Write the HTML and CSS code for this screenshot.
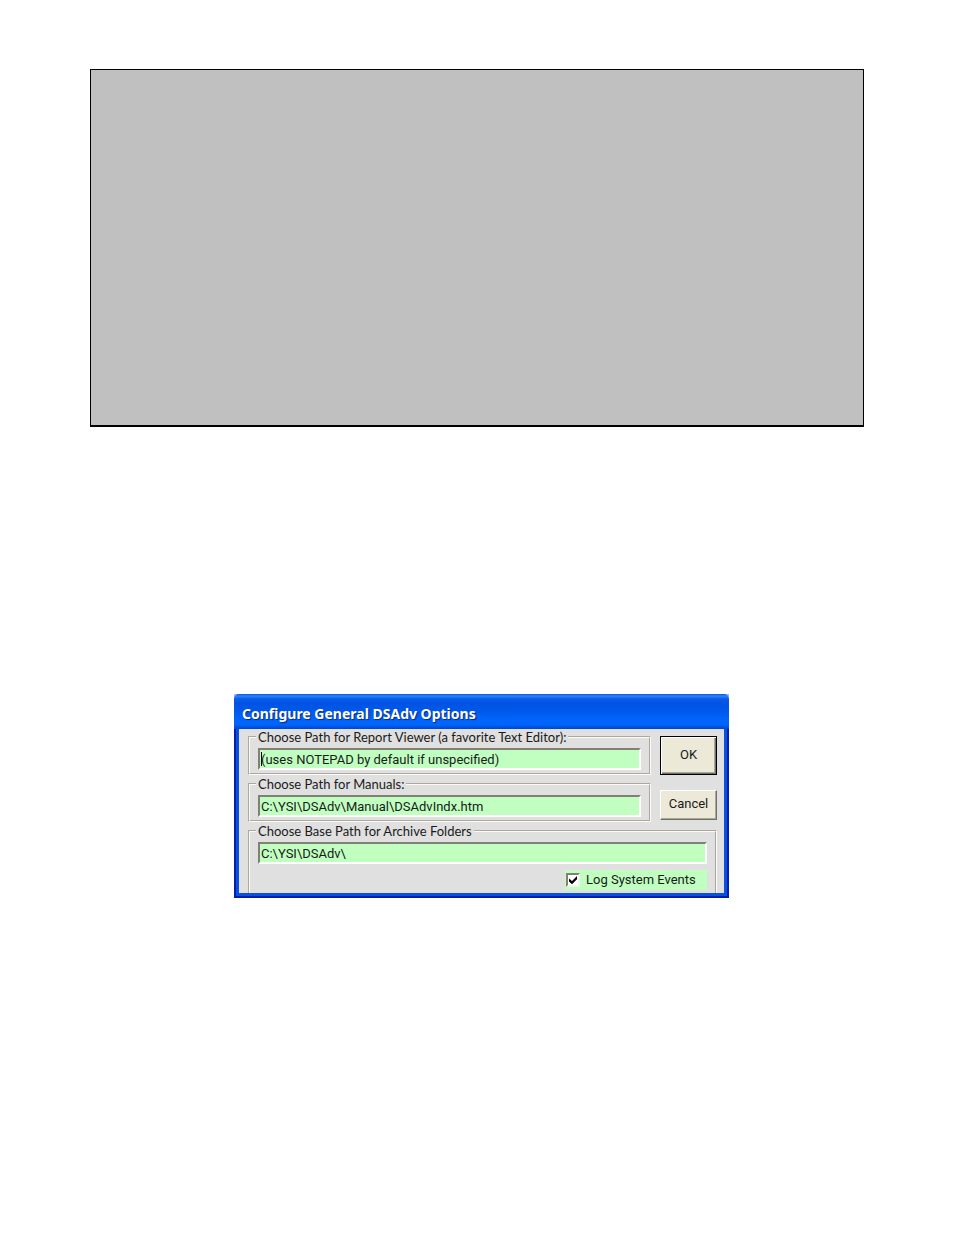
FILE: index.html
```html
<!DOCTYPE html>
<html lang="en">
<head>
    <meta charset="UTF-8">
    <meta name="viewport" content="width=device-width, initial-scale=1.0">
    <title>Configure General DSAdv Options</title>
    <link rel="stylesheet" href="styles.css">
</head>
<body>
    <div class="panel"></div>

    <div class="figure">
        <form class="dialog">
            <h1 class="title">Configure General DSAdv Options</h1>
            <div class="content">
                <div class="top-row">
                    <div class="paths">
                        <fieldset>
                            <legend><label for="viewer">Choose Path for Report Viewer (a favorite Text Editor):</label></legend>
                            <input type="text" id="viewer" class="active" value="(uses NOTEPAD by default if unspecified)">
                        </fieldset>
                        <fieldset>
                            <legend><label for="manuals">Choose Path for Manuals:</label></legend>
                            <input type="text" id="manuals" value="C:\YSI\DSAdv\Manual\DSAdvIndx.htm">
                        </fieldset>
                    </div>
                    <div class="buttons">
                        <button type="button" class="ok">OK</button>
                        <button type="button">Cancel</button>
                    </div>
                </div>
                <fieldset class="archive">
                    <legend><label for="archive">Choose Base Path for Archive Folders</label></legend>
                    <input type="text" id="archive" value="C:\YSI\DSAdv\">
                    <label class="log-events">
                        <input type="checkbox" checked>
                        Log System Events
                    </label>
                </fieldset>
            </div>
        </form>
    </div>
</body>
</html>
```
FILE: styles.css
```css
* {
    box-sizing: border-box;
}
body {
    margin: 0;
    padding: 69px 90px;
    background-color: white;
    font-family: Roboto, "Liberation Sans", sans-serif;
    font-size: 13px;
    line-height: 16px;
    color: #1a1a1a;
}
.panel {
    min-height: 358px;
    background-color: #c0c0c0;
    border: 1px solid black;
    border-bottom-width: 2px;
}
.figure {
    display: flex;
    justify-content: center;
    margin-top: 267px;
    padding-left: 9px;
}

/* Window */
.dialog {
    width: 100%;
    max-width: 495px;
    background-color: #a8b8ec;
}
.title {
    margin: 0;
    padding: 3px 8px 0;
    height: 35px;
    font-family: "Noto Sans", sans-serif;
    font-size: 14px;
    font-weight: bold;
    line-height: 34px;
    color: white;
    text-shadow: 1px 1px 1px #0a2a80;
    white-space: nowrap;
    background: linear-gradient(#0a50d8 0, #2a86ff 2px, #0a5ae8 5px, #0054e3 10px, #0058ea 17px, #0066ff 27px, #0062fa 31px, #0046c8 35px);
    border-radius: 5px 5px 0 0;
}
.content {
    padding: 0 10px 3px 12px;
    background-color: #e0e0e0;
    border: 2px solid #0020a8;
    border-top: none;
    box-shadow: inset 3px 0 #0a50e0, inset -3px 0 #0a50e0, inset 0 -3px #0a50e0;
}
.top-row {
    display: flex;
    gap: 9px;
}
.paths {
    flex: 1;
    min-width: 0;
}

/* Group boxes */
fieldset {
    margin: 0 0 1px;
    padding: 3px 8px;
    min-width: 0;
    border: 2px groove #fffbf0;
}
legend {
    margin-left: -2px;
    padding: 0 2px;
    height: 16px;
    font-family: Lato, sans-serif;
}
.archive {
    margin-bottom: 0;
    padding-bottom: 3px;
    border-bottom: none;
}
input[type="text"] {
    display: block;
    width: 100%;
    height: 22px;
    padding: 0 1px;
    font: inherit;
    color: inherit;
    background-color: #c0ffc0;
    border: 2px solid;
    border-color: #808075 white white #808075;
    border-radius: 0;
    outline: none;
}
/* text cursor in front of the first character */
input.active {
    background-image: linear-gradient(black, black);
    background-repeat: no-repeat;
    background-position: 1px 2px;
    background-size: 1px 14px;
}

/* Check box */
.log-events {
    display: flex;
    align-items: center;
    gap: 6px;
    width: 142px;
    height: 20px;
    margin: 6px 0 0 auto;
    padding-left: 1px;
    background-color: #c0ffc0;
}
input[type="checkbox"] {
    appearance: none;
    width: 14px;
    height: 14px;
    margin: 0;
    background-color: white;
    border: 2px solid;
    border-color: #808075 #f4f4ee #f4f4ee #808075;
}
input[type="checkbox"]:checked::after {
    content: "";
    display: block;
    width: 10px;
    height: 10px;
    background-color: black;
    clip-path: polygon(10% 35%, 40% 60%, 90% 10%, 90% 42%, 40% 92%, 10% 65%);
}

/* Buttons */
.buttons {
    display: flex;
    flex-direction: column;
    gap: 15px;
    width: 57px;
    padding-top: 7px;
}
button {
    height: 30px;
    padding: 0 0 2px;
    font: inherit;
    color: inherit;
    background-color: #ece9d8;
    border: 1px solid;
    border-color: white #716f64 #716f64 white;
    border-radius: 0;
    box-shadow: inset -1px -1px #aca899;
}
.ok {
    height: 39px;
    border: 1px solid black;
    box-shadow: inset 1px 1px white, inset -1px -1px #716f64, inset -2px -2px #aca899;
}
```
